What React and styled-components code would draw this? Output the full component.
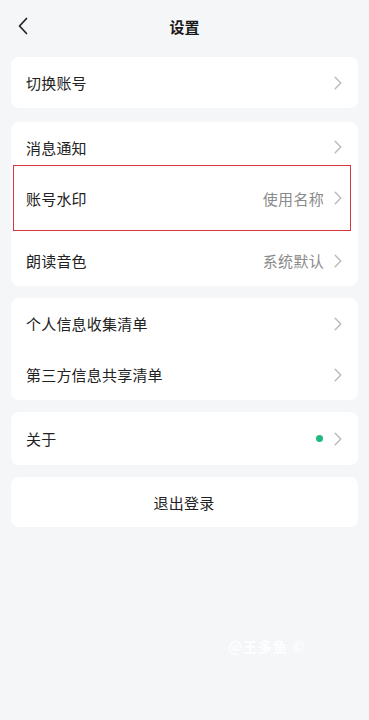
import React from "react";
import styled, { createGlobalStyle } from "styled-components";

const Global = createGlobalStyle`
  html, body { margin: 0; padding: 0; background: #f5f6f8; }
  body { font-family: "Noto Sans CJK SC", "Noto Sans", sans-serif; color: #222; }
`;

const Page = styled.div`
  width: 369px;
  height: 720px;
  background: #f5f6f8;
  display: flex;
  flex-direction: column;
  position: relative;
  overflow: hidden;
`;

const Header = styled.div`
  height: 52px;
  display: flex;
  align-items: center;
  justify-content: center;
  position: relative;
`;

const BackBtn = styled.div`
  position: absolute;
  left: 17px;
  top: 17px;
  width: 12px;
  height: 18px;
  display: flex;
`;

const Title = styled.div`
  font-size: 15px;
  font-weight: 700;
  color: #1a1a1a;
  line-height: 1;
`;

const Content = styled.div`
  padding: 5px 11px 0;
  display: flex;
  flex-direction: column;
  gap: 12px;
`;

const Card = styled.div`
  background: #fff;
  border-radius: 8px;
  display: flex;
  flex-direction: column;
  position: relative;
  margin-bottom: ${(p) => p.$mb || 0}px;
`;

const Row = styled.div`
  height: ${(p) => p.$h}px;
  padding: ${(p) => p.$pt || 0}px 16px 0 15px;
  box-sizing: border-box;
  display: flex;
  align-items: center;
  justify-content: ${(p) => (p.$center ? "center" : "space-between")};
`;

const Label = styled.span`
  font-size: 15px;
  line-height: 1;
  color: #222;
  letter-spacing: 0.2px;
`;

const Right = styled.div`
  display: flex;
  align-items: center;
  gap: 10px;
`;

const Value = styled.span`
  font-size: 15px;
  line-height: 1;
  color: #8a8a8a;
  letter-spacing: 0.3px;
`;

const Dot = styled.span`
  width: 7px;
  height: 7px;
  border-radius: 50%;
  background: #20b97e;
  margin-right: 1px;
`;

const Highlight = styled.div`
  position: absolute;
  left: 2px;
  top: 43px;
  width: 338px;
  height: 66px;
  border: 1.5px solid #d8373f;
  box-sizing: border-box;
  pointer-events: none;
`;

const Watermark = styled.div`
  position: absolute;
  left: 228px;
  top: 636px;
  font-size: 14px;
  font-weight: 700;
  color: rgba(255, 255, 255, 0.95);
  letter-spacing: 1px;
`;

const Chevron = () => (
  <svg width="8" height="14" viewBox="0 0 8 14">
    <path d="M1.2 1.2 L6.8 7 L1.2 12.8" fill="none" stroke="#b8b8b8" strokeWidth="1.3" strokeLinecap="round" strokeLinejoin="round" />
  </svg>
);

const Item = ({ label, value, dot, h, pt }) => (
  <Row $h={h} $pt={pt}>
    <Label>{label}</Label>
    <Right>
      {value && <Value>{value}</Value>}
      {dot && <Dot />}
      <Chevron />
    </Right>
  </Row>
);

export default function App() {
  return (
    <>
      <Global />
      <Page>
        <Header>
          <BackBtn>
            <svg width="12" height="18" viewBox="0 0 12 18">
              <path d="M9.5 1.5 L2.5 9 L9.5 16.5" fill="none" stroke="#222" strokeWidth="1.7" strokeLinecap="round" strokeLinejoin="round" />
            </svg>
          </BackBtn>
          <Title>设置</Title>
        </Header>
        <Content>
          <Card $mb={2}>
            <Item label="切换账号" h={51} />
          </Card>
          <Card>
            <Item label="消息通知" h={50} />
            <Item label="账号水印" value="使用名称" h={52} />
            <Item label="朗读音色" value="系统默认" h={62} pt={11} />
            <Highlight />
          </Card>
          <Card>
            <Item label="个人信息收集清单" h={51} />
            <Item label="第三方信息共享清单" h={51} />
          </Card>
          <Card>
            <Item label="关于" dot h={53} />
          </Card>
          <Card>
            <Row $h={50} $center>
              <Label>退出登录</Label>
            </Row>
          </Card>
        </Content>
        <Watermark>@王多鱼 ©</Watermark>
      </Page>
    </>
  );
}
